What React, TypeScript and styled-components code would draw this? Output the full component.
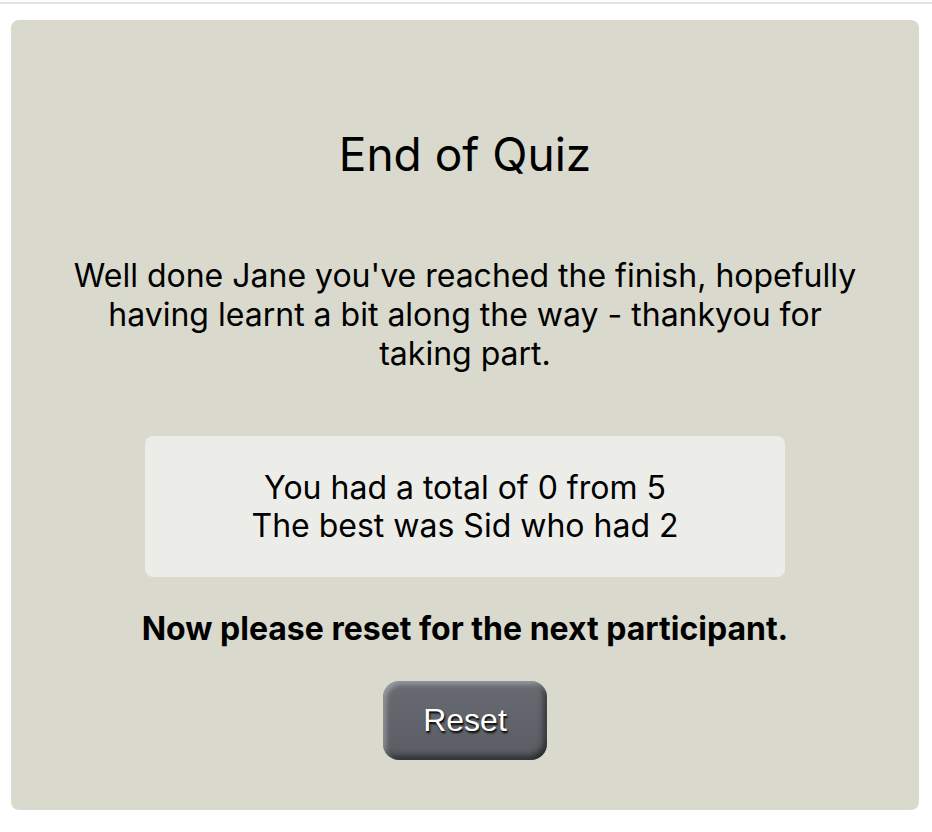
import styled, { createGlobalStyle } from 'styled-components';

const GlobalStyle = createGlobalStyle`
  body {
    margin: 0;
    background: #ffffff;
    font-family: Inter, 'Noto Sans', sans-serif;
    color: #000;
  }
`;

const TopRule = styled.div`
  height: 2px;
  margin-top: 2px;
  background: #e2e2e2;
`;

const Page = styled.div`
  padding: 16px 13px 23px 11px;
`;

const Card = styled.section`
  background-color: #d9dacd;
  border-radius: 8px;
  display: flex;
  flex-direction: column;
  align-items: center;
  padding: 108px 50px 50px;
  text-align: center;
`;

const Title = styled.h1`
  font-size: 46px;
  font-weight: 400;
  line-height: 53px;
  margin: 0;
`;

const Message = styled.p`
  font-size: 32px;
  line-height: 39px;
  margin: 75px 0 0;
  max-width: 800px;
`;

const ScoreBox = styled.div`
  background-color: #ecede8;
  border-radius: 8px;
  width: 640px;
  box-sizing: border-box;
  padding: 33px 20px 32px;
  margin-top: 63px;
  font-size: 32px;
  line-height: 38px;
`;

const ScoreLine = styled.div``;

const Notice = styled.p`
  font-size: 32px;
  font-weight: 700;
  line-height: 38px;
  margin: 33px 0 0;
`;

const ResetButton = styled.button`
  margin-top: 33px;
  width: 164px;
  height: 79px;
  border: none;
  border-radius: 16px;
  background: linear-gradient(#686b71, #595c62);
  box-shadow: inset 3px 3px 5px rgba(255, 255, 255, 0.35),
    inset -3px -4px 6px rgba(0, 0, 0, 0.55);
  color: #fff;
  font-family: 'Liberation Sans', Arial, sans-serif;
  font-size: 32px;
  text-shadow: 1px 2px 2px #000;
  cursor: pointer;
`;

const App = () => {
  return (
    <>
      <GlobalStyle />
      <TopRule />
      <Page>
        <Card>
          <Title>End of Quiz</Title>
          <Message>
            Well done Jane you've reached the finish, hopefully having learnt a bit along the
            way - thankyou for taking part.
          </Message>
          <ScoreBox>
            <ScoreLine>You had a total of 0 from 5</ScoreLine>
            <ScoreLine>The best was Sid who had 2</ScoreLine>
          </ScoreBox>
          <Notice>Now please reset for the next participant.</Notice>
          <ResetButton>Reset</ResetButton>
        </Card>
      </Page>
    </>
  );
};

export default App;
